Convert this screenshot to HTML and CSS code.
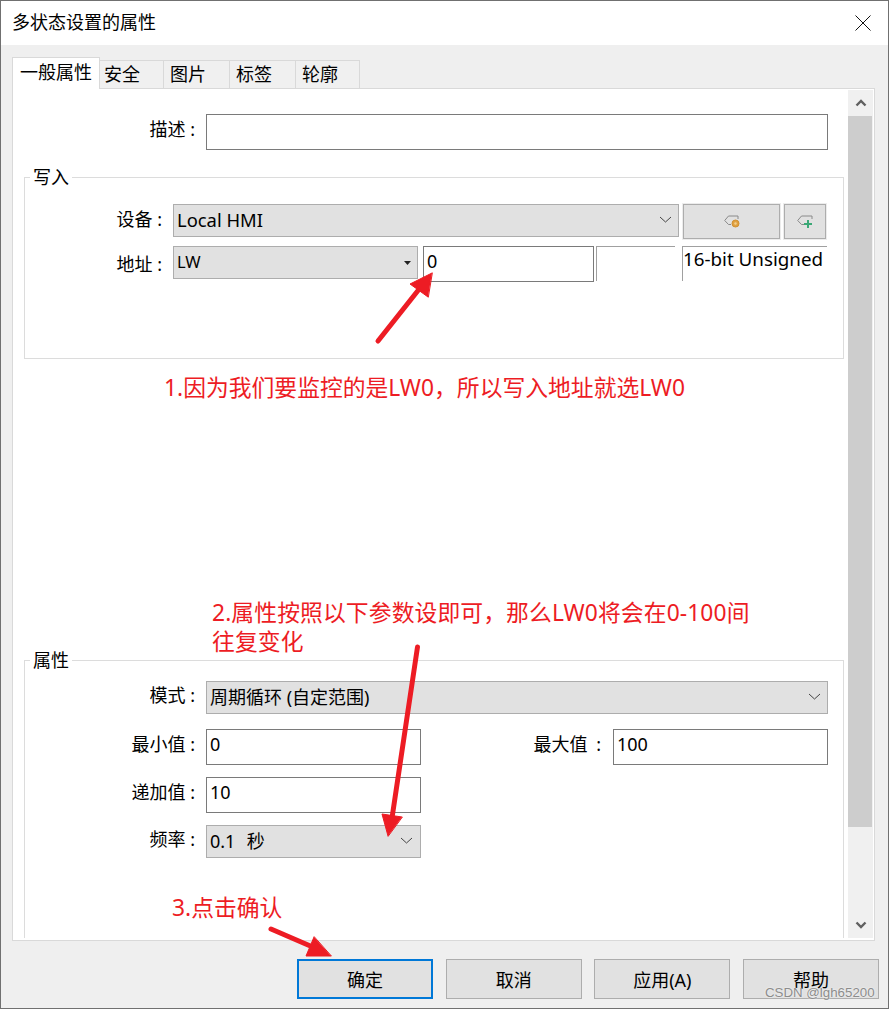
FILE: index.html
```html
<!DOCTYPE html>
<html lang="zh-CN">
<head>
<meta charset="utf-8">
<title>多状态设置的属性</title>
<link rel="stylesheet" href="styles.css">
</head>
<body>
<div class="window">
  <header class="titlebar">
    <span class="title">多状态设置的属性</span>
    <svg class="close" width="16" height="16" viewBox="0 0 16 16"><path d="M0.5 0.5L15.5 15.5M15.5 0.5L0.5 15.5" stroke="#111" stroke-width="1" fill="none"/></svg>
  </header>
  <main class="body">
    <nav class="tabs">
      <div class="tab tab-active">一般属性</div>
      <div class="tab tab-w64">安全</div>
      <div class="tab tab-w66">图片</div>
      <div class="tab tab-w66">标签</div>
      <div class="tab tab-w64b">轮廓</div>
    </nav>
    <section class="panel">
      <div class="content">
        <div class="row desc-row">
          <label class="label label-desc">描述 :</label>
          <div class="field field-grow"></div>
        </div>
        <div class="group group-write">
          <div class="legend">写入</div>
          <div class="row device-row">
            <label class="label label-narrow">设备 :</label>
            <div class="combo combo-device">
              <span class="latin">Local HMI</span>
              <svg class="chev" width="13" height="7" viewBox="0 0 13 7"><path d="M1 1L6.500 6L12 1" stroke="#444" fill="none"/></svg>
            </div>
            <div class="iconbtn iconbtn-wide">
              <svg width="16" height="13" viewBox="0 0 16 13"><path d="M11 1H4.500L0.700 5.500L4.500 9.500H7" stroke="#8a8a8a" fill="none"/><path d="M11 1H14V4" stroke="#8a8a8a" fill="none"/><circle cx="11.500" cy="8.500" r="3.500" fill="#e0a040" stroke="#d09030"/><circle cx="11.500" cy="8.500" r="1.200" fill="#f2cf8a"/></svg>
            </div>
            <div class="iconbtn iconbtn-small">
              <svg width="16" height="13" viewBox="0 0 16 13"><path d="M15 1H4.500L0.700 5.500L4.500 9.500H7" stroke="#8a8a8a" fill="none"/><path d="M15 1V4" stroke="#8a8a8a" fill="none"/><path d="M11 5V13M7 9H15" stroke="#3aa876" stroke-width="2" fill="none"/></svg>
            </div>
          </div>
          <div class="row addr-row">
            <label class="label label-narrow label-addr">地址 :</label>
            <div class="combo combo-addr">
              <span class="small-text">LW</span>
              <svg class="tri" width="7" height="4" viewBox="0 0 7 4"><path d="M0 0H7L3.500 4Z" fill="#222"/></svg>
            </div>
            <div class="field field-addr">0</div>
            <div class="open-field open-a"></div>
            <div class="open-field open-b">16-bit Unsigned</div>
          </div>
        </div>
        <div class="group group-attr">
          <div class="legend">属性</div>
          <div class="row mode-row">
            <label class="label label-wide label-sel">模式 :</label>
            <div class="combo combo-mode">
              <span>周期循环 (自定范围)</span>
              <svg class="chev" width="13" height="7" viewBox="0 0 13 7"><path d="M1 1L6.500 6L12 1" stroke="#444" fill="none"/></svg>
            </div>
          </div>
          <div class="row value-row">
            <label class="label label-wide">最小值 :</label>
            <div class="field field-half">0</div>
            <label class="label label-max">最大值 :</label>
            <div class="field field-half">100</div>
          </div>
          <div class="row value-row">
            <label class="label label-wide">递加值 :</label>
            <div class="field field-half">10</div>
          </div>
          <div class="row value-row">
            <label class="label label-wide label-sel">频率 :</label>
            <div class="combo combo-freq">
              <span>0.1&nbsp; 秒</span>
              <svg class="chev" width="13" height="7" viewBox="0 0 13 7"><path d="M1 1L6.500 6L12 1" stroke="#444" fill="none"/></svg>
            </div>
          </div>
        </div>
      </div>
      <aside class="scrollbar">
        <div class="scroll-btn">
          <svg width="12" height="8" viewBox="0 0 12 8"><path d="M1.500 6.500L6 2L10.500 6.500" stroke="#606060" stroke-width="2.400" fill="none"/></svg>
        </div>
        <div class="thumb"></div>
        <div class="track"></div>
        <div class="scroll-btn scroll-btn-down">
          <svg width="12" height="8" viewBox="0 0 12 8"><path d="M1.500 1.500L6 6L10.500 1.500" stroke="#606060" stroke-width="2.400" fill="none"/></svg>
        </div>
      </aside>
    </section>
    <footer class="actions">
      <button class="btn btn-primary">确定</button>
      <button class="btn">取消</button>
      <button class="btn">应用(A)</button>
      <button class="btn">帮助</button>
    </footer>
  </main>

  <div class="note note-1">1.因为我们要监控的是LW0，所以写入地址就选LW0</div>
  <div class="note note-2">2.属性按照以下参数设即可，那么LW0将会在0-100间<br>往复变化</div>
  <div class="note note-3">3.点击确认</div>
  <svg class="arrows" width="889" height="1009" viewBox="0 0 889 1009">
    <g fill="#ed1c24" stroke="#ed1c24" stroke-linecap="round" stroke-linejoin="round">
      <path d="M378 341L420 288" stroke-width="5" fill="none"/>
      <path d="M432 273L410 284L428 297Z" stroke-width="1"/>
      <path d="M417.500 647L392 818" stroke-width="5" fill="none"/>
      <path d="M388 836L382 814L402 817Z" stroke-width="1"/>
      <path d="M271 929L315 948" stroke-width="5" fill="none"/>
      <path d="M331 956L306 956L314 937Z" stroke-width="1"/>
    </g>
  </svg>
  <div class="watermark">CSDN @lgh65200</div>
</div>
</body>
</html>
```

FILE: styles.css
```css
* { box-sizing: border-box; }
html, body { margin: 0; padding: 0; background: #fff; }
body {
  font-family: "Noto Sans", "Noto Sans CJK SC", sans-serif;
  font-size: 18px;
  line-height: 24px;
  color: #000;
}
.window {
  position: relative;
  width: 889px;
  height: 1009px;
  border: 1px solid #707070;
  display: flex;
  flex-direction: column;
  overflow: hidden;
  background: #f0f0f0;
}
.titlebar {
  flex: none;
  height: 44px;
  background: #fff;
  display: flex;
  align-items: center;
  justify-content: space-between;
  padding: 0 16px 0 11px;
}
.title { line-height: 43px; height: 44px; }
.close { display: block; margin-right: 1px; }
.body {
  flex: 1;
  min-height: 0;
  display: flex;
  flex-direction: column;
  padding: 12px 0 0 11px;
  background: #efefef;
}
.tabs {
  flex: none;
  display: flex;
  align-items: flex-end;
  height: 32px;
  position: relative;
  z-index: 1;
}
.tab {
  height: 29px;
  line-height: 27px;
  padding-left: 4px;
  border: 1px solid #d9d9d9;
  border-left: 0;
  background: #f0f0f0;
}
.tab-w64 { width: 64px; }
.tab-w66 { width: 66px; padding-left: 6px; }
.tab-w64b { width: 64px; padding-left: 6px; }
.tab-active {
  width: 88px;
  height: 32px;
  padding-left: 7px;
  line-height: 28px;
  background: #fff;
  border: 1px solid #d9d9d9;
  border-bottom: 0;
}
.panel {
  flex: none;
  width: 863px;
  height: 853px;
  margin-top: -1px;
  padding: 1px 1px 2px 0;
  background: #fff;
  border: 1px solid #d9d9d9;
  display: flex;
}
.content {
  flex: 1;
  min-width: 0;
  display: flex;
  flex-direction: column;
  padding: 0 4px 0 11px;
}
.row { display: flex; align-items: flex-start; }
.desc-row { margin-top: 24px; height: 36px; }
.label {
  flex: none;
  text-align: right;
  white-space: nowrap;
}
.label-desc { width: 171px; margin-right: 11px; line-height: 30px; }
.label-wide { width: 170px; margin-right: 11px; line-height: 30px; }
.label-narrow { width: 137px; margin-right: 11px; line-height: 30px; }
.label-addr { line-height: 36px; }
.label-sel { line-height: 29px; }
.label-max { width: 180px; margin-right: 12px; line-height: 30px; word-spacing: 4px; }
.field {
  height: 36px;
  border: 1px solid #7a7a7a;
  background: #fff;
  padding: 0 3px;
  line-height: 29px;
}
.field-grow { width: 622px; }
.field-half { width: 215px; }
.field-addr { width: 171px; margin-left: 5px; }
.group {
  border: 1px solid #dcdcdc;
  padding: 0;
}
.group-write { margin-top: 27px; height: 182px; }
.group-attr { margin-top: 301px; flex: 1; border-bottom: 0; }
.legend {
  width: fit-content;
  height: 24px;
  margin: -12px 0 0 5px;
  padding: 0 3px;
  background: #fff;
  line-height: 22px;
}
.device-row { margin-top: 14px; height: 35px; }
.addr-row { margin-top: 7px; }
.combo {
  height: 33px;
  background: #e1e1e1;
  border: 1px solid #adadad;
  display: flex;
  align-items: center;
  justify-content: space-between;
  padding: 0 6px 0 3px;
  white-space: nowrap;
}
.combo span { line-height: 28px; margin-top: -2px; }
.combo .latin { font-size: 18.4px; }
.combo-device { width: 506px; margin-right: 4px; }
.combo-addr { width: 245px; padding-right: 6px; }
.combo .small-text { font-size: 16.5px; }
.tri { display: block; }
.chev { display: block; margin-top: -2px; }
.combo-mode { width: 622px; }
.combo-freq { width: 215px; padding-right: 7px; word-spacing: 1px; }
.iconbtn {
  height: 35px;
  background: #e1e1e1;
  border: 1px solid #adadad;
  outline: 1px solid #ececec;
  display: flex;
  align-items: center;
  justify-content: center;
}
.iconbtn svg { display: block; }
.iconbtn-wide { width: 97px; margin-right: 4px; }
.iconbtn-small { width: 42px; }
.open-field {
  height: 35px;
  border-top: 1px solid #a0a0a0;
  border-left: 1px solid #a0a0a0;
  line-height: 24px;
  white-space: nowrap;
}
.open-a { width: 79px; margin-left: 2px; }
.open-b { width: 145px; margin-left: 7px; font-size: 18.8px; }
.mode-row { margin-top: 8px; }
.value-row { margin-top: 12px; }
.mode-row + .value-row { margin-top: 15px; }
.scrollbar {
  flex: none;
  width: 25px;
  display: flex;
  flex-direction: column;
  background: #f0f0f0;
}
.scroll-btn {
  flex: none;
  height: 26px;
  display: flex;
  align-items: center;
  justify-content: center;
}
.scroll-btn-down { margin-top: auto; }
.thumb { flex: none; width: 24px; height: 711px; background: #cdcdcd; }
.track { flex: 1; }
.actions {
  flex: none;
  display: flex;
  justify-content: flex-end;
  gap: 12.67px;
  padding: 18px 9px 0 0;
}
.btn {
  width: 136px;
  height: 40px;
  margin: 0;
  padding: 1px 0 0;
  background: #e1e1e1;
  border: 1px solid #adadad;
  font: inherit;
  color: #000;
}
.btn-primary { border: 2px solid #0078d7; }
.note {
  position: absolute;
  color: #ed1c24;
  font-size: 22.8px;
  line-height: 29px;
  white-space: nowrap;
}
.note-1 { left: 163px; top: 372px; }
.note-2 { left: 211px; top: 597px; letter-spacing: 0.1px; }
.note-3 { left: 171px; top: 892px; }
.arrows { position: absolute; left: -1px; top: -1px; pointer-events: none; }
.watermark {
  position: absolute;
  left: 764px;
  top: 983px;
  font-family: "Liberation Sans", sans-serif;
  font-size: 13.3px;
  line-height: 18px;
  color: #8c8c8c;
  white-space: nowrap;
  text-shadow: 0 0 2px #fff;
}
```
